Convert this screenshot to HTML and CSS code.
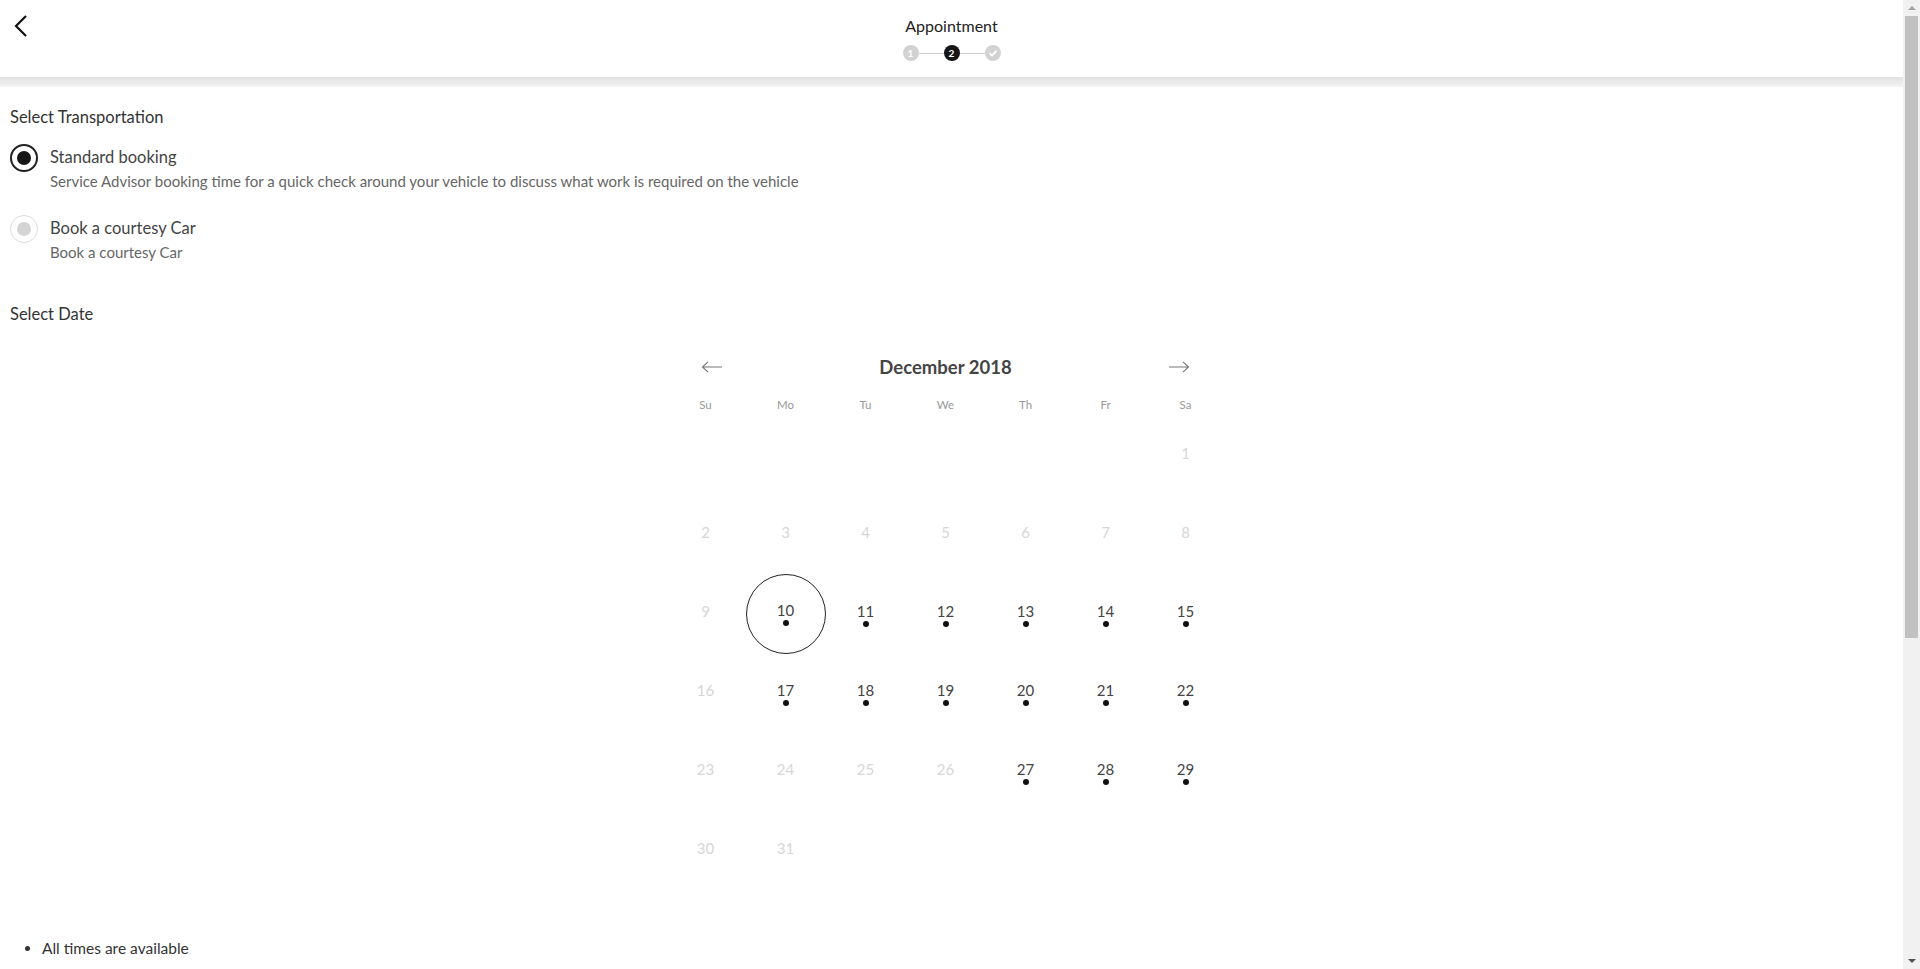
FILE: index.html
```html
<!DOCTYPE html>
<html>
<head>
<meta charset="utf-8">
<link rel="stylesheet" href="styles.css">
</head>
<body>
<div class="page">
<header class="topbar">
  <div class="back">
    <svg width="16" height="24" viewBox="0 0 16 24"><path d="M13 2 L3 12 L13 22" fill="none" stroke="#111" stroke-width="2.2"/></svg>
  </div>
  <div class="title-block">
    <div class="title">Appointment</div>
    <div class="stepper">
      <span class="step done">1</span>
      <span class="step-line"></span>
      <span class="step active">2</span>
      <span class="step-line"></span>
      <span class="step done"><svg width="10" height="10" viewBox="0 0 10 10"><path d="M1.5 5.2 L4 7.5 L8.6 2.6" fill="none" stroke="#fff" stroke-width="1.8"/></svg></span>
    </div>
  </div>
  <div></div>
</header>
<div class="band"></div>
<main class="content">
  <h2 class="section-title">Select Transportation</h2>
  <div class="option">
    <span class="radio checked"><span class="radio-dot"></span></span>
    <div class="option-text">
      <div class="option-title">Standard booking</div>
      <div class="option-desc">Service Advisor booking time for a quick check around your vehicle to discuss what work is required on the vehicle</div>
    </div>
  </div>
  <div class="option second">
    <span class="radio"><span class="radio-dot"></span></span>
    <div class="option-text">
      <div class="option-title">Book a courtesy Car</div>
      <div class="option-desc">Book a courtesy Car</div>
    </div>
  </div>
  <h2 class="section-title date-title">Select Date</h2>
  <div class="calendar">
    <div class="cal-head">
      <span class="nav"><svg width="22" height="12" viewBox="0 0 22 12"><path d="M21 6 H1.5 M7 0.8 L1.5 6 L7 11.2" fill="none" stroke="#777" stroke-width="1.1"/></svg></span>
      <span class="month">December 2018</span>
      <span class="nav"><svg width="22" height="12" viewBox="0 0 22 12"><path d="M1 6 H20.5 M15 0.8 L20.5 6 L15 11.2" fill="none" stroke="#777" stroke-width="1.1"/></svg></span>
    </div>
    <div class="weekdays">
      <span>Su</span><span>Mo</span><span>Tu</span><span>We</span><span>Th</span><span>Fr</span><span>Sa</span>
    </div>
    <div class="days">
      <span class="day empty"></span><span class="day empty"></span><span class="day empty"></span><span class="day empty"></span><span class="day empty"></span><span class="day empty"></span>
      <span class="day off"><b>1</b><i></i></span>
      <span class="day off"><b>2</b><i></i></span>
      <span class="day off"><b>3</b><i></i></span>
      <span class="day off"><b>4</b><i></i></span>
      <span class="day off"><b>5</b><i></i></span>
      <span class="day off"><b>6</b><i></i></span>
      <span class="day off"><b>7</b><i></i></span>
      <span class="day off"><b>8</b><i></i></span>
      <span class="day off"><b>9</b><i></i></span>
      <span class="day on selected"><b>10</b><i></i></span>
      <span class="day on"><b>11</b><i></i></span>
      <span class="day on"><b>12</b><i></i></span>
      <span class="day on"><b>13</b><i></i></span>
      <span class="day on"><b>14</b><i></i></span>
      <span class="day on"><b>15</b><i></i></span>
      <span class="day off"><b>16</b><i></i></span>
      <span class="day on"><b>17</b><i></i></span>
      <span class="day on"><b>18</b><i></i></span>
      <span class="day on"><b>19</b><i></i></span>
      <span class="day on"><b>20</b><i></i></span>
      <span class="day on"><b>21</b><i></i></span>
      <span class="day on"><b>22</b><i></i></span>
      <span class="day off"><b>23</b><i></i></span>
      <span class="day off"><b>24</b><i></i></span>
      <span class="day off"><b>25</b><i></i></span>
      <span class="day off"><b>26</b><i></i></span>
      <span class="day on"><b>27</b><i></i></span>
      <span class="day on"><b>28</b><i></i></span>
      <span class="day on"><b>29</b><i></i></span>
      <span class="day off"><b>30</b><i></i></span>
      <span class="day off"><b>31</b><i></i></span>
    </div>
  </div>
  <ul class="legend">
    <li>All times are available</li>
  </ul>
</main>
</div>
<div class="scrollbar">
  <span class="sb-up"></span>
  <span class="sb-thumb"></span>
  <span class="sb-down"></span>
</div>
</body>
</html>
```

FILE: styles.css
```css
html, body {
  margin: 0;
  padding: 0;
  background: #fff;
  overflow: hidden;
}
body {
  font-family: "Lato", "Open Sans", "Liberation Sans", sans-serif;
  color: #333;
}
.page {
  margin-right: 17px;
}
.topbar {
  height: 77px;
  display: grid;
  grid-template-columns: 1fr auto 1fr;
  background: #fff;
}
.back {
  padding: 14px 0 0 13px;
}
.back svg { display: block; }
.title-block {
  display: flex;
  flex-direction: column;
  align-items: center;
  padding-top: 16px;
}
.title {
  font-size: 16px;
  line-height: 20px;
  color: #222;
}
.stepper {
  display: flex;
  align-items: center;
  margin-top: 9px;
}
.step {
  width: 16px;
  height: 16px;
  border-radius: 50%;
  display: flex;
  align-items: center;
  justify-content: center;
  font-size: 10px;
  font-weight: 700;
  color: #fff;
}
.step.done { background: #d2d2d2; }
.step.active { background: #151515; }
.step-line {
  width: 25px;
  height: 1px;
  background: #cfcfcf;
}
.band {
  height: 10px;
  background: linear-gradient(#e2e2e2, #efefef 80%, #f6f6f6);
}
.content {
  padding: 20px 22px 40px 10px;
}
.section-title {
  margin: 0;
  font-size: 16.5px;
  line-height: 20px;
  font-weight: 400;
  color: #333;
}
.option {
  display: flex;
  gap: 12px;
  margin-top: 17px;
}
.option.second { margin-top: 24px; }
.radio {
  width: 28px;
  height: 28px;
  box-sizing: border-box;
  border-radius: 50%;
  border: 1px solid #dcdcdc;
  display: flex;
  align-items: center;
  justify-content: center;
  flex: none;
}
.radio .radio-dot {
  width: 14px;
  height: 14px;
  border-radius: 50%;
  background: #d4d4d4;
}
.radio.checked { border: 2px solid #222; }
.radio.checked .radio-dot { background: #161616; }
.option-text { padding-top: 3px; }
.option-title {
  font-size: 16.5px;
  line-height: 20px;
  color: #444;
}
.option-desc {
  margin-top: 4px;
  font-size: 15px;
  line-height: 20px;
  color: #666;
}
.date-title { margin-top: 42px; }
.calendar {
  width: 560px;
  margin: 31px auto 0;
}
.cal-head {
  display: flex;
  align-items: center;
  justify-content: space-between;
  padding: 0 35px;
  height: 24px;
}
.nav svg { display: block; }
.month {
  font-size: 18.5px;
  font-weight: 700;
  color: #444;
}
.weekdays {
  display: grid;
  grid-template-columns: repeat(7, 80px);
  margin-top: 18px;
  font-size: 11.5px;
  line-height: 16px;
  color: #999;
  text-align: center;
}
.days {
  display: grid;
  grid-template-columns: repeat(7, 80px);
  grid-auto-rows: 79px;
  margin-top: 4px;
}
.day {
  display: flex;
  flex-direction: column;
  align-items: center;
  justify-content: center;
  box-sizing: border-box;
}
.day b {
  font-weight: 400;
  font-size: 15px;
  line-height: 16px;
}
.day i {
  width: 6px;
  height: 6px;
  margin-top: 2px;
  border-radius: 50%;
  background: #111;
}
.day.off b { color: #d6d6d6; }
.day.off i { visibility: hidden; }
.day.on b { color: #444; }
.day.selected {
  border: 1px solid #222;
  border-radius: 50%;
  width: 80px;
  height: 80px;
  margin-top: -1px;
}
.legend {
  margin: 47px 0 0;
  padding-left: 32px;
  font-size: 15.5px;
  line-height: 20px;
  color: #333;
}
.scrollbar {
  position: fixed;
  top: 0;
  right: 0;
  bottom: 0;
  width: 17px;
  background: #f1f1f1;
  display: flex;
  flex-direction: column;
  align-items: center;
}
.sb-up, .sb-down {
  width: 0;
  height: 0;
  border-left: 4px solid transparent;
  border-right: 4px solid transparent;
  margin: 6px 0;
}
.sb-up { border-bottom: 4px solid #a3a3a3; }
.sb-down { border-top: 4px solid #505050; margin-top: auto; }
.sb-thumb {
  width: 13px;
  height: 622px;
  margin-top: 0;
  background: #c1c1c1;
}
```
